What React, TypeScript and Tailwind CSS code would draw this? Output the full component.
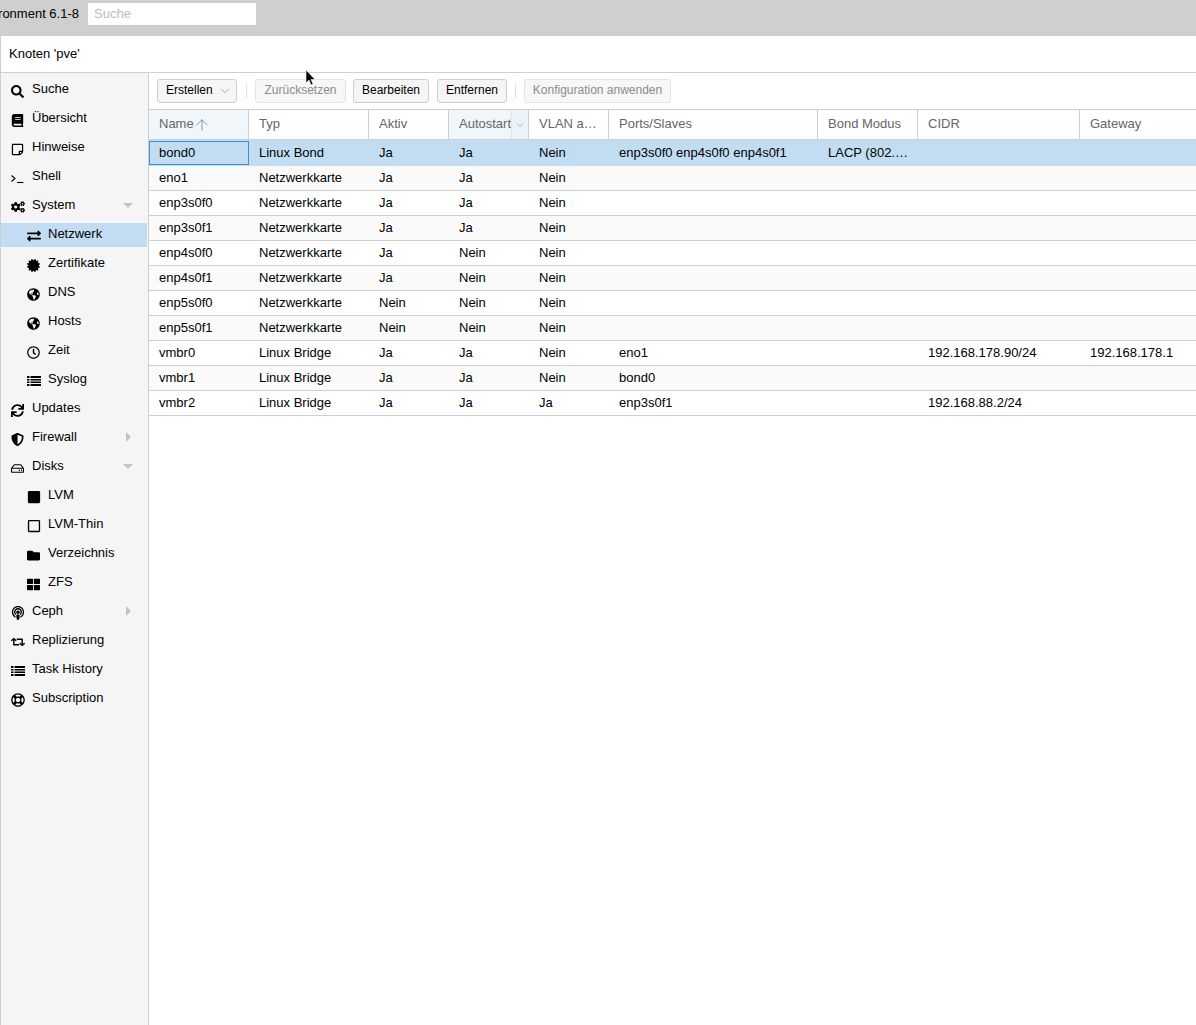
import { ArrowUp, ChevronDown } from "lucide-react";
import {
  FaSearch, FaBook, FaRegStickyNote, FaCogs, FaExchangeAlt, FaCertificate, FaGlobeAmericas, FaRegClock,
  FaSync, FaShieldAlt, FaRegHdd, FaSquare, FaRegSquare, FaFolder, FaThLarge, FaPodcast, FaRetweet, FaRegLifeRing,
} from "react-icons/fa";

function TerminalIcon() {
  return (
    <svg width="13" height="13" viewBox="0 0 13 13" fill="none" stroke="#000" strokeWidth="1.1">
      <path d="M0.5 3.5 L4 6.5 L0.5 9.5" />
      <path d="M6 10.5 H12.5" />
    </svg>
  );
}

function ListIcon() {
  return (
    <svg width="14" height="12" viewBox="0 0 14 12" fill="#000">
      <rect x="0" y="1" width="2.5" height="2" />
      <rect x="3.5" y="1" width="10.5" height="2" />
      <rect x="0" y="4" width="2.5" height="1.5" />
      <rect x="3.5" y="4" width="10.5" height="1.5" />
      <rect x="0" y="6.5" width="2.5" height="1.5" />
      <rect x="3.5" y="6.5" width="10.5" height="1.5" />
      <rect x="0" y="9" width="2.5" height="2" />
      <rect x="3.5" y="9" width="10.5" height="2" />
    </svg>
  );
}

const navItems = [
  { label: "Suche", icon: <FaSearch size={13} /> },
  { label: "Übersicht", icon: <FaBook size={13} /> },
  { label: "Hinweise", icon: <FaRegStickyNote size={13} /> },
  { label: "Shell", icon: <TerminalIcon /> },
  { label: "System", icon: <FaCogs size={14} />, arrow: "down" },
  { label: "Netzwerk", icon: <FaExchangeAlt size={14} />, child: true, active: true },
  { label: "Zertifikate", icon: <FaCertificate size={13} />, child: true },
  { label: "DNS", icon: <FaGlobeAmericas size={13} />, child: true },
  { label: "Hosts", icon: <FaGlobeAmericas size={13} />, child: true },
  { label: "Zeit", icon: <FaRegClock size={13} />, child: true },
  { label: "Syslog", icon: <ListIcon />, child: true },
  { label: "Updates", icon: <FaSync size={13} /> },
  { label: "Firewall", icon: <FaShieldAlt size={13} />, arrow: "right" },
  { label: "Disks", icon: <FaRegHdd size={13} />, arrow: "down" },
  { label: "LVM", icon: <FaSquare size={14} />, child: true },
  { label: "LVM-Thin", icon: <FaRegSquare size={14} />, child: true },
  { label: "Verzeichnis", icon: <FaFolder size={13} />, child: true },
  { label: "ZFS", icon: <FaThLarge size={13} />, child: true },
  { label: "Ceph", icon: <FaPodcast size={14} />, arrow: "right" },
  { label: "Replizierung", icon: <FaRetweet size={14} /> },
  { label: "Task History", icon: <ListIcon /> },
  { label: "Subscription", icon: <FaRegLifeRing size={14} /> },
];

const rows = [
  ["bond0", "Linux Bond", "Ja", "Ja", "Nein", "enp3s0f0 enp4s0f0 enp4s0f1", "LACP (802.…", "", ""],
  ["eno1", "Netzwerkkarte", "Ja", "Ja", "Nein", "", "", "", ""],
  ["enp3s0f0", "Netzwerkkarte", "Ja", "Ja", "Nein", "", "", "", ""],
  ["enp3s0f1", "Netzwerkkarte", "Ja", "Ja", "Nein", "", "", "", ""],
  ["enp4s0f0", "Netzwerkkarte", "Ja", "Nein", "Nein", "", "", "", ""],
  ["enp4s0f1", "Netzwerkkarte", "Ja", "Nein", "Nein", "", "", "", ""],
  ["enp5s0f0", "Netzwerkkarte", "Nein", "Nein", "Nein", "", "", "", ""],
  ["enp5s0f1", "Netzwerkkarte", "Nein", "Nein", "Nein", "", "", "", ""],
  ["vmbr0", "Linux Bridge", "Ja", "Ja", "Nein", "eno1", "", "192.168.178.90/24", "192.168.178.1"],
  ["vmbr1", "Linux Bridge", "Ja", "Ja", "Nein", "bond0", "", "", ""],
  ["vmbr2", "Linux Bridge", "Ja", "Ja", "Ja", "enp3s0f1", "", "192.168.88.2/24", ""],
];

const gridCols = "grid grid-cols-[100px_120px_80px_80px_80px_209px_100px_162px_1fr]";

function ToolButton({ label, disabled, className, children }: { label: string; disabled?: boolean; className: string; children?: React.ReactNode }) {
  return (
    <div
      className={`h-[24px] flex items-center pb-[2px] border rounded-[3px] text-[12px] ${className} ${
        disabled ? "bg-[#f7f7f7] border-[#e3e3e3] text-[#8c8c8c]" : "bg-[#f5f5f5] border-[#cfcfcf] text-black"
      }`}
    >
      {label}
      {children}
    </div>
  );
}

function HeaderCell({ label, className = "", children }: { label: string; className?: string; children?: React.ReactNode }) {
  return (
    <div className={`flex items-center pl-[10px] pb-[2px] border-r border-[#cfcfcf] text-[#666] overflow-hidden whitespace-nowrap ${className}`}>
      {label}
      {children}
    </div>
  );
}

export default function App() {
  return (
    <div className="relative w-[1196px] h-[1025px] overflow-hidden bg-white text-[13px] text-black font-['Liberation_Sans',Arial,sans-serif]">
      {/* Top bar */}
      <div className="h-[36px] bg-[#cfcfcf] flex items-start pt-[3px]">
        <div className="w-[79px] h-[22px] flex items-center justify-end overflow-hidden whitespace-nowrap">
          <span className="shrink-0">Virtual Environment 6.1-8</span>
        </div>
        <div className="ml-[9px] w-[168px] h-[22px] bg-white flex items-center pl-[6px] text-[#bbb]">Suche</div>
      </div>

      <div className="h-[989px] border-l border-[#cfcfcf] flex flex-col">
        <div className="h-[37px] shrink-0 border-b border-[#cfcfcf] flex items-center pl-[8px]">Knoten 'pve'</div>

        <div className="flex-1 flex min-h-0">
          {/* Sidebar */}
          <div className="w-[148px] shrink-0 bg-[#f5f5f5] border-r border-[#cfcfcf] pt-[5px] flex flex-col gap-[5px]">
            {navItems.map((item) => (
              <div
                key={item.label}
                className={`relative h-[24px] w-[146px] flex items-center pb-[2px] ${item.active ? "bg-[#c2ddf2]" : ""} ${
                  item.child ? "pl-[26px]" : "pl-[10px]"
                }`}
              >
                <span className="w-[21px] h-[14px] mt-[4px] flex items-center shrink-0">{item.icon}</span>
                <span>{item.label}</span>
                {item.arrow === "down" && (
                  <span className="absolute left-[122px] top-[9px] w-0 h-0 border-x-[5px] border-x-transparent border-t-[5px] border-t-[#c4c4c4]" />
                )}
                {item.arrow === "right" && (
                  <span className="absolute left-[125px] top-[6px] w-0 h-0 border-y-[5px] border-y-transparent border-l-[5px] border-l-[#c4c4c4]" />
                )}
              </div>
            ))}
          </div>

          {/* Main */}
          <div className="flex-1 min-w-0">
            <div className="h-[37px] border-b border-[#cfcfcf] flex items-center pl-[8px] pb-[1px]">
              <ToolButton label="Erstellen" className="w-[80px] pl-[8px]">
                <ChevronDown size={14} strokeWidth={1} color="#777" className="ml-[5px] mt-[3px]" />
              </ToolButton>
              <div className="w-px h-[14px] bg-[#e0e0e0] ml-[9px] mr-[8px]" />
              <ToolButton label="Zurücksetzen" disabled className="w-[91px] justify-center" />
              <ToolButton label="Bearbeiten" className="w-[76px] justify-center ml-[7px]" />
              <ToolButton label="Entfernen" className="w-[70px] justify-center ml-[8px]" />
              <div className="w-px h-[14px] bg-[#e0e0e0] ml-[8px] mr-[8px]" />
              <ToolButton label="Konfiguration anwenden" disabled className="w-[147px] justify-center" />
            </div>

            {/* Table header */}
            <div className={`${gridCols} h-[30px] border-b border-[#cfcfcf]`}>
              <HeaderCell label="Name" className="bg-[#f0f6fa]">
                <ArrowUp size={18} strokeWidth={1} color="#777" className="ml-[-1px] mt-[2px]" />
              </HeaderCell>
              <HeaderCell label="Typ" />
              <HeaderCell label="Aktiv" />
              <div className="flex border-r border-l border-[#cfcfcf] -ml-px text-[#666]">
                <div className="w-[62px] pl-[10px] pb-[2px] flex items-center overflow-hidden whitespace-nowrap bg-[#f0f6fa]">Autostart</div>
                <div className="flex-1 flex items-center justify-center bg-[#eaf3f8] border-l border-[#dbe7ef]">
                  <ChevronDown size={12} strokeWidth={1} color="#777" />
                </div>
              </div>
              <HeaderCell label="VLAN a…" />
              <HeaderCell label="Ports/Slaves" />
              <HeaderCell label="Bond Modus" />
              <HeaderCell label="CIDR" />
              <HeaderCell label="Gateway" className="border-r-0" />
            </div>

            {/* Table rows */}
            {rows.map((row, i) => (
              <div
                key={row[0]}
                className={`${gridCols} ${
                  i === 0
                    ? "h-[26px] bg-[#c2ddf2]"
                    : `h-[25px] border-b border-[#cfcfcf] ${i % 2 === 1 ? "bg-[#fafafa]" : "bg-white"}`
                }`}
              >
                {row.map((cell, j) => (
                  <div
                    key={j}
                    className={`flex items-center overflow-hidden whitespace-nowrap ${
                      i === 0 && j === 0 ? "border border-[#3892d4] pl-[9px] my-px" : "pl-[10px]"
                    }`}
                  >
                    {cell}
                  </div>
                ))}
              </div>
            ))}
          </div>
        </div>
      </div>

      {/* Mouse pointer */}
      <svg className="absolute left-[305px] top-[69px]" width="12" height="18" viewBox="0 0 12 18">
        <path d="M1 1 L1 14 L4 11 L6 16 L8 15 L6 10.5 L10 10.5 Z" fill="#000" stroke="#fff" strokeWidth="0.6" />
      </svg>
    </div>
  );
}
